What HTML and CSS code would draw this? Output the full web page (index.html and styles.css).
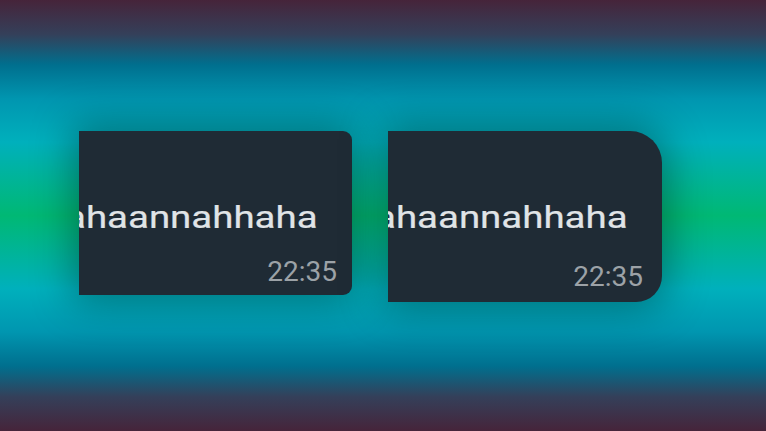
FILE: index.html
```html
<!DOCTYPE html>
<html lang="en">
<head>
<meta charset="utf-8">
<title>Bubbles</title>
<link rel="stylesheet" href="styles.css">
</head>
<body>
<main class="stage">
  <div class="bubble bubble-a">
    <div class="msg"><span class="msg-text">hahaahaannahhaha</span></div>
    <div class="time">22:35</div>
  </div>
  <div class="bubble bubble-b">
    <div class="msg"><span class="msg-text">hahaahaannahhaha</span></div>
    <div class="time">22:35</div>
  </div>
</main>
</body>
</html>
```

FILE: styles.css
```css
html, body {
  margin: 0;
  padding: 0;
  height: 100%;
}
body {
  font-family: Roboto, "Liberation Sans", sans-serif;
  background: linear-gradient(to bottom,
    #46243a 0%,
    #34405a 8%,
    #006f8e 15%,
    #0096b0 23%,
    #00b0bc 33%,
    #00b874 50%,
    #00b0bc 67%,
    #0096b0 77%,
    #006f8e 85%,
    #34405a 92%,
    #46243a 100%);
  overflow: hidden;
}
.stage {
  display: flex;
  align-items: flex-start;
  gap: 36px;
  padding: 131px 0 0 79px;
}
.bubble {
  background: #1f2b35;
  display: flex;
  flex-direction: column;
  overflow: hidden;
  box-shadow: 0 0 40px 6px rgba(0, 0, 0, 0.34);
  box-sizing: border-box;
}
.bubble-a {
  width: 273px;
  height: 164px;
  border-radius: 0 9px 9px 0;
  padding: 69px 0 7px 0;
}
.bubble-b {
  width: 274px;
  height: 171px;
  border-radius: 0 32px 26px 0;
  padding: 69px 0 9px 0;
}
.msg {
  display: flex;
  justify-content: flex-end;
  padding-right: 34px;
  line-height: 36px;
  font-size: 31px;
  white-space: nowrap;
}
.msg-text {
  display: inline-block;
  flex-shrink: 0;
  color: #e0e4e7;
  transform: scaleX(1.24);
  transform-origin: right center;
  -webkit-text-stroke: 0.2px #e0e4e7;
}
.time {
  margin-top: auto;
  text-align: right;
  font-size: 28px;
  line-height: 32px;
  color: #9ca2a7;
}
.bubble-a .time { padding-right: 15px; }
.bubble-b .time { padding-right: 19px; }
```
